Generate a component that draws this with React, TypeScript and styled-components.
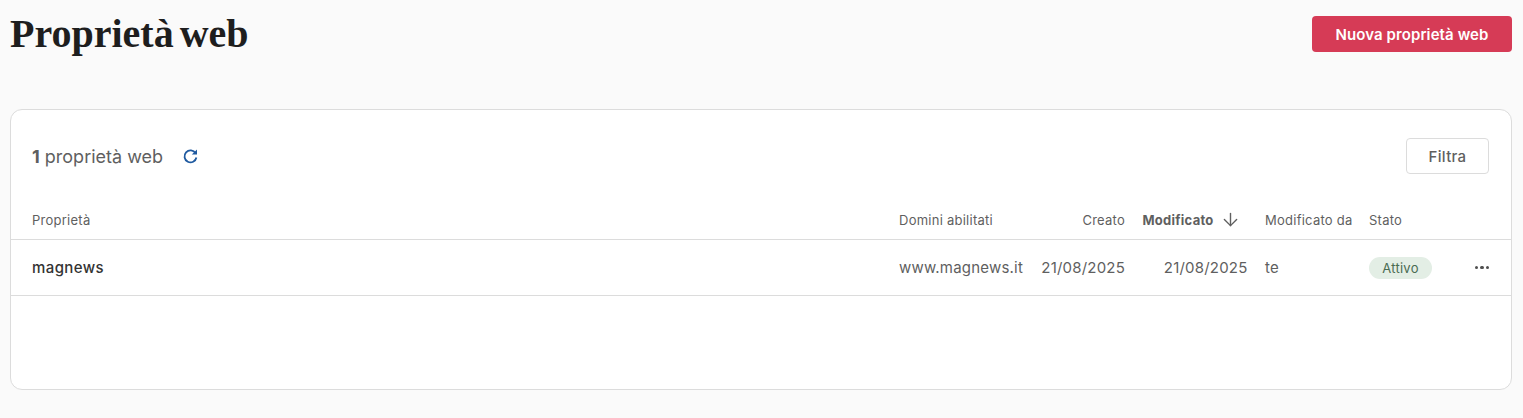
import React from "react";
import styled, { createGlobalStyle } from "styled-components";
import { ArrowDown } from "lucide-react";

const Global = createGlobalStyle`
  html, body {
    margin: 0;
    padding: 0;
    background: #fafafa;
    font-family: Inter, "Liberation Sans", sans-serif;
  }
`;

const Page = styled.div`
  padding: 16px 11px 28px 10px;
  height: 418px;
  box-sizing: border-box;
  overflow: hidden;
`;

const Header = styled.header`
  display: flex;
  justify-content: space-between;
  align-items: flex-start;
  margin-bottom: 57px;
`;

const Title = styled.h1`
  margin: 0;
  font-family: "Liberation Serif", serif;
  font-weight: 700;
  font-size: 40px;
  line-height: 36px;
  word-spacing: -4px;
  color: #1e1e1e;
`;

const PrimaryButton = styled.button`
  width: 200px;
  height: 36px;
  border: 0;
  border-radius: 4px;
  background: #d63b56;
  color: #fff;
  font-family: inherit;
  font-size: 15px;
  font-weight: 600;
  letter-spacing: 0.1px;
`;

const Card = styled.section`
  height: 281px;
  box-sizing: border-box;
  background: #fff;
  border: 1px solid #dcdcdc;
  border-radius: 12px;
`;

const Toolbar = styled.div`
  display: flex;
  justify-content: space-between;
  align-items: center;
  padding: 28px 22px 0 21px;
`;

const Count = styled.div`
  display: flex;
  align-items: center;
  gap: 19px;
  font-size: 18px;
  color: #5f5f5f;
  b {
    font-weight: 700;
  }
`;

const Refresh = styled.svg`
  display: block;
  width: 17px;
  height: 17px;
  color: #1f5aa0;
`;

const FilterButton = styled.button`
  width: 83px;
  height: 36px;
  background: #fff;
  border: 1px solid #dcdcdc;
  border-radius: 4px;
  color: #5f5f5f;
  font-family: inherit;
  font-size: 15px;
  font-weight: 500;
  letter-spacing: 0.3px;
`;

const Row = styled.div<{ $head?: boolean }>`
  display: grid;
  grid-template-columns: 849.5px 124px 84.5px 105px 86.5px 63px 1fr;
  column-gap: 17.5px;
  align-items: center;
  box-sizing: border-box;
  padding: 0 21px;
  border-bottom: 1px solid #dcdcdc;
  height: ${(p) => (p.$head ? "40px" : "56px")};
  margin-top: ${(p) => (p.$head ? "26px" : "0")};
  font-size: ${(p) => (p.$head ? "13px" : "15px")};
  letter-spacing: ${(p) => (p.$head ? "0.25px" : "0.2px")};
  color: #5f5f5f;
`;

const Cell = styled.div<{ $right?: boolean }>`
  white-space: nowrap;
  text-align: ${(p) => (p.$right ? "right" : "left")};
`;

const SortCell = styled.div`
  display: flex;
  align-items: center;
  gap: 6px;
  font-weight: 700;
  white-space: nowrap;
`;

const Name = styled.div`
  font-weight: 500;
  color: #333;
  letter-spacing: 0.4px;
`;

const Badge = styled.span`
  display: inline-flex;
  align-items: center;
  justify-content: center;
  width: 63px;
  height: 22px;
  border-radius: 11px;
  background: #e3eee5;
  color: #4a6b52;
  font-size: 13px;
  letter-spacing: 0.25px;
`;

const Dots = styled.div`
  display: flex;
  justify-content: flex-end;
  gap: 2px;
  padding-right: 1px;
  span {
    width: 3.5px;
    height: 3.5px;
    border-radius: 50%;
    background: #4f4f4f;
  }
`;

export default function App() {
  return (
    <Page>
      <Global />
      <Header>
        <Title>Proprietà web</Title>
        <PrimaryButton>Nuova proprietà web</PrimaryButton>
      </Header>
      <Card>
        <Toolbar>
          <Count>
            <span>
              <b>1</b> proprietà web
            </span>
            <Refresh viewBox="0 0 17 17" fill="none">
              <path
                d="M13.6 5.2A6 6 0 1 0 14.4 9.5"
                stroke="currentColor"
                strokeWidth="1.8"
              />
              <path d="M9.8 6.6H15V1.4Z" fill="currentColor" />
            </Refresh>
          </Count>
          <FilterButton>Filtra</FilterButton>
        </Toolbar>
        <Row $head>
          <Cell>Proprietà</Cell>
          <Cell>Domini abilitati</Cell>
          <Cell $right>Creato</Cell>
          <SortCell>
            Modificato <ArrowDown size={21} strokeWidth={1.6} />
          </SortCell>
          <Cell>Modificato da</Cell>
          <Cell>Stato</Cell>
          <div />
        </Row>
        <Row>
          <Name>magnews</Name>
          <Cell>www.magnews.it</Cell>
          <Cell $right>21/08/2025</Cell>
          <Cell $right>21/08/2025</Cell>
          <Cell>te</Cell>
          <Cell>
            <Badge>Attivo</Badge>
          </Cell>
          <Dots>
            <span />
            <span />
            <span />
          </Dots>
        </Row>
      </Card>
    </Page>
  );
}
